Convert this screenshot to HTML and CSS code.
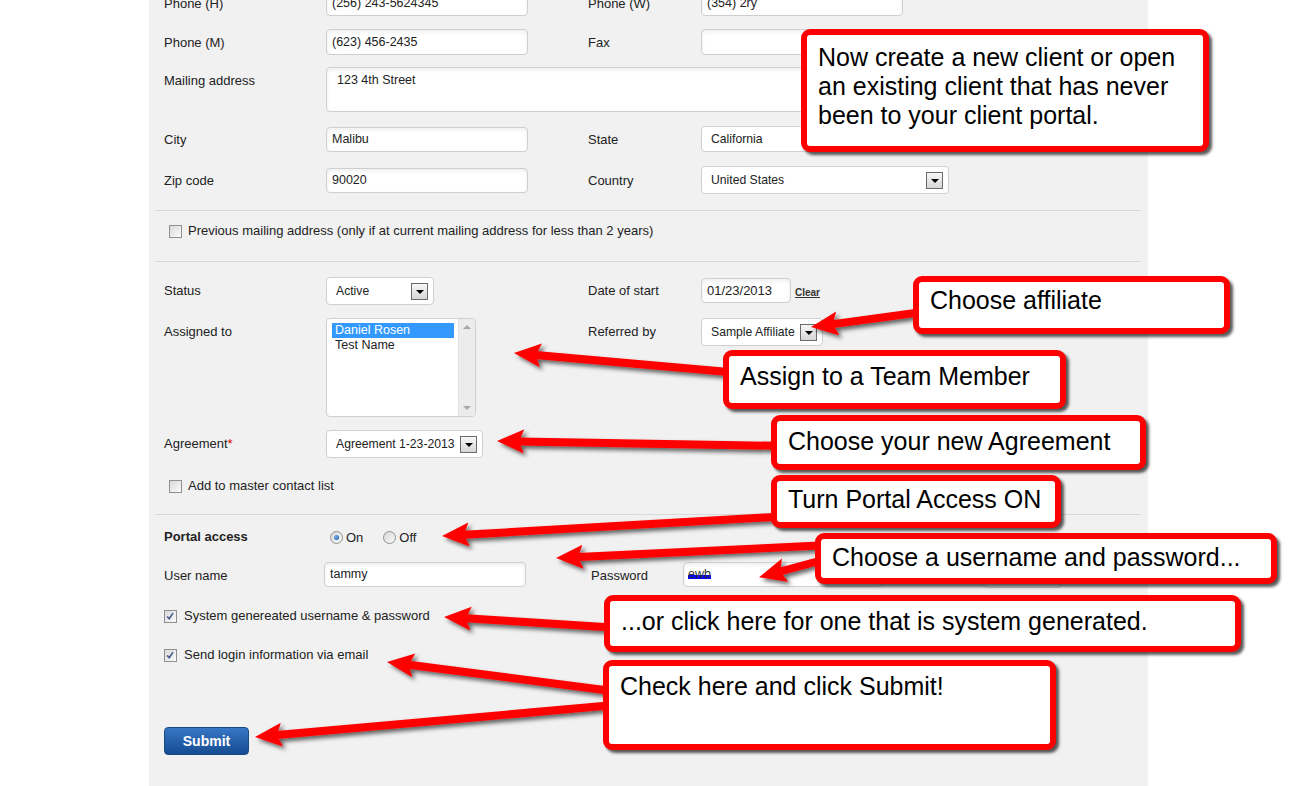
FILE: index.html
```html
<!DOCTYPE html>
<html>
<head>
<meta charset="utf-8">
<title>Client form</title>
<link rel="stylesheet" href="styles.css">
</head>
<body>
<div class="page">
  <div class="panel">
    <div class="form">
      <div class="row r-phone-h">
        <div class="lbl">Phone (H)</div>
        <div><div class="input w-std">(256) 243-5624345</div></div>
        <div class="lbl">Phone (W)</div>
        <div><div class="input w-std">(354) 2ry</div></div>
      </div>
      <div class="row r-phone-m">
        <div class="lbl">Phone (M)</div>
        <div><div class="input w-std">(623) 456-2435</div></div>
        <div class="lbl">Fax</div>
        <div><div class="input w-std"></div></div>
      </div>
      <div class="row r-mail">
        <div class="lbl">Mailing address</div>
        <div class="span3"><div class="textarea">123 4th Street</div></div>
      </div>
      <div class="row r-city">
        <div class="lbl">City</div>
        <div><div class="input w-std top1">Malibu</div></div>
        <div class="lbl">State</div>
        <div><div class="select s-state"><span>California</span><span class="ddbtn"></span></div></div>
      </div>
      <div class="row r-zip">
        <div class="lbl lbl-low">Zip code</div>
        <div><div class="input w-std top2">90020</div></div>
        <div class="lbl lbl-low">Country</div>
        <div><div class="select s-country"><span>United States</span><span class="ddbtn"></span></div></div>
      </div>

      <div class="divider d1"></div>
      <div class="check-row cr-prev"><span class="cb"></span><span>Previous mailing address (only if at current mailing address for less than 2 years)</span></div>
      <div class="divider d2"></div>

      <div class="row r-status">
        <div class="lbl">Status</div>
        <div><div class="select s-status"><span>Active</span><span class="ddbtn"></span></div></div>
        <div class="lbl">Date of start</div>
        <div class="date-wrap"><div class="input w-date top1">01/23/2013</div><a class="clear">Clear</a></div>
      </div>
      <div class="row r-assigned">
        <div class="lbl">Assigned to</div>
        <div>
          <div class="listbox">
            <div class="options">
              <div class="opt selected">Daniel Rosen</div>
              <div class="opt">Test Name</div>
            </div>
            <div class="scrollbar"><span class="sb-up"></span><span class="sb-down"></span></div>
          </div>
        </div>
        <div class="lbl">Referred by</div>
        <div><div class="select s-ref"><span>Sample Affiliate</span><span class="ddbtn"></span></div></div>
      </div>
      <div class="row r-agree">
        <div class="lbl">Agreement<span class="req">*</span></div>
        <div><div class="select s-agree"><span>Agreement 1-23-2013</span><span class="ddbtn"></span></div></div>
      </div>
      <div class="check-row cr-master"><span class="cb"></span><span>Add to master contact list</span></div>

      <div class="divider d3"></div>

      <div class="row r-portal">
        <div class="lbl-bold">Portal access</div>
        <div class="radios">
          <span class="rd on"></span><span class="rd-text">On</span>
          <span class="rd off-rd"></span><span class="rd-text">Off</span>
        </div>
      </div>
      <div class="row-user">
        <div class="lbl">User name</div>
        <div><div class="input w-user">tammy</div></div>
        <div class="lbl">Password</div>
        <div class="pw-wrap"><div class="input w-pw"><span class="pw-text">ewb</span></div><div class="gen-btn"></div></div>
      </div>
      <div class="check-row cr-sys"><span class="cb"><svg viewBox="0 0 13 13" width="11" height="11"><path d="M2.5 6.5 L5 9 L9.5 2.5" class="tick"/></svg></span><span>System genereated username &amp; password</span></div>
      <div class="check-row cr-send"><span class="cb"><svg viewBox="0 0 13 13" width="11" height="11"><path d="M2.5 6.5 L5 9 L9.5 2.5" class="tick"/></svg></span><span>Send login information via email</span></div>

      <div class="submit-row"><button class="submit">Submit</button></div>
    </div>
  </div>

  <svg class="arrows" width="1295" height="786" viewBox="0 0 1295 786">
    <defs>
      <filter id="sh" x="-10%" y="-60%" width="130%" height="220%">
        <feDropShadow dx="3" dy="3" stdDeviation="2" flood-color="#000" flood-opacity="0.6"/>
      </filter>
      <marker id="head" markerUnits="userSpaceOnUse" markerWidth="30" markerHeight="26" refX="5" refY="12" orient="auto">
        <path d="M0,0 L27,12 L0,24 L5,12 Z" fill="#ff0000"/>
      </marker>
    </defs>
    <g filter="url(#sh)" stroke="#ff0000" stroke-width="8" fill="none">
      <line x1="930" y1="311" x2="832.8" y2="324.1" marker-end="url(#head)"/>
      <line x1="740" y1="373" x2="535.9" y2="354.9" marker-end="url(#head)"/>
      <line x1="790" y1="446" x2="519" y2="441.4" marker-end="url(#head)"/>
      <line x1="790" y1="516" x2="464" y2="534.8" marker-end="url(#head)"/>
      <line x1="830" y1="545" x2="578" y2="557" marker-end="url(#head)"/>
      <line x1="830" y1="558" x2="780.3" y2="571.5" marker-end="url(#head)"/>
      <line x1="620" y1="628" x2="466" y2="618.3" marker-end="url(#head)"/>
      <line x1="620" y1="692" x2="408.8" y2="664.7" marker-end="url(#head)"/>
      <line x1="620" y1="704.5" x2="276.9" y2="735.1" marker-end="url(#head)"/>
    </g>
  </svg>

  <div class="callout c1">Now create a new client or open<br>an existing client that has never<br>been to your client portal.</div>
  <div class="callout c2">Choose affiliate</div>
  <div class="callout c3">Assign to a Team Member</div>
  <div class="callout c4">Choose your new Agreement</div>
  <div class="callout c5">Turn Portal Access ON</div>
  <div class="callout c6">Choose a username and password...</div>
  <div class="callout c7">...or click here for one that is system generated.</div>
  <div class="callout c8">Check here and click Submit!</div>
</div>
</body>
</html>
```

FILE: styles.css
```css
* { box-sizing: border-box; }
html, body { margin: 0; padding: 0; background: #fff; }
body {
  font-family: "Liberation Sans", Arial, sans-serif;
  font-size: 13px;
  color: #222;
  overflow: hidden;
}
.page { position: relative; width: 1295px; height: 786px; overflow: hidden; }
.panel {
  margin-left: 149px;
  width: 999px;
  height: 786px;
  background: #f1f1f1;
  overflow: hidden;
}
.form { margin-top: -10px; }

.row {
  display: grid;
  grid-template-columns: 162px 262px 113px 1fr;
  padding-left: 15px;
  align-items: start;
}
.lbl { padding-top: 6px; line-height: 15px; white-space: nowrap; }
.lbl-low { padding-top: 7px; }
.lbl-bold { font-weight: bold; line-height: 16px; }
.req { color: #e00000; }
.span3 { grid-column: 2 / span 3; }

.r-phone-h { margin-bottom: 13px; }
.r-phone-m { margin-bottom: 12px; }
.r-mail { margin-bottom: 14px; }
.r-city { margin-bottom: 14px; }
.r-status { margin-top: 15px; margin-bottom: 13px; }
.r-assigned { margin-bottom: 13px; }
.r-agree { margin-bottom: 20px; }
.r-portal { margin-top: 14px; margin-bottom: 17px; }

.input {
  height: 26px;
  border: 1px solid #cfcfcf;
  border-radius: 4px;
  background: #fff;
  box-shadow: inset 0 2px 4px rgba(0, 0, 0, 0.07);
  padding: 0 5px;
  font-size: 12.5px;
  line-height: 24px;
  white-space: nowrap;
  overflow: hidden;
  color: #222;
}
.w-std { width: 202px; }
.top1 { margin-top: 1px; height: 25px; line-height: 23px; }
.top2 { margin-top: 2px; height: 25px; line-height: 23px; }

.textarea {
  width: 560px;
  height: 45px;
  border: 1px solid #cfcfcf;
  border-radius: 4px;
  background: #fff;
  box-shadow: inset 0 2px 4px rgba(0, 0, 0, 0.07);
  padding: 5px 10px;
  font-size: 12.5px;
  line-height: 15px;
}

.select {
  display: flex;
  align-items: center;
  justify-content: space-between;
  height: 28px;
  border: 1px solid #cfcfcf;
  border-radius: 4px;
  background: #fff;
  padding: 0 5px 0 9px;
  font-size: 12.2px;
  white-space: nowrap;
  color: #222;
}
.s-state { width: 248px; height: 26px; }
.s-country { width: 248px; }
.s-status { width: 108px; }
.s-ref { width: 122px; }
.s-agree { width: 157px; padding-right: 5px; }
.ddbtn {
  position: relative;
  flex: 0 0 17px;
  width: 17px;
  height: 17px;
  border: 1px solid #6b6b6b;
  background: linear-gradient(#f7f7f7, #d6d6d6);
  margin-left: 3px;
}
.ddbtn::after {
  content: "";
  position: absolute;
  left: 4px;
  top: 6px;
  border-left: 4px solid transparent;
  border-right: 4px solid transparent;
  border-top: 4px solid #000;
}

.date-wrap { display: flex; align-items: flex-start; }
.w-date { width: 90px; font-size: 13px; }
.clear {
  margin-left: 4px;
  margin-top: 10px;
  font-size: 10px;
  font-weight: bold;
  color: #333;
  text-decoration: underline;
  line-height: 12px;
}

.listbox {
  display: flex;
  width: 150px;
  height: 99px;
  border: 1px solid #cfcfcf;
  border-radius: 4px;
  background: #fff;
  overflow: hidden;
}
.options { flex: 1; padding: 4px 0 0 5px; font-size: 12.5px; }
.opt { height: 15px; line-height: 15px; padding-left: 3px; width: 122px; color: #222; }
.opt.selected { background: #3399ff; color: #fff; }
.scrollbar {
  position: relative;
  width: 17px;
  background: #ececec;
  border-left: 1px solid #e2e2e2;
}
.sb-up, .sb-down {
  position: absolute;
  left: 4px;
  border-left: 4px solid transparent;
  border-right: 4px solid transparent;
}
.sb-up { top: 6px; border-bottom: 4px solid #a8a8a8; }
.sb-down { bottom: 6px; border-top: 4px solid #a8a8a8; }

.divider { height: 1px; background: #d9d9d9; margin-left: 6px; margin-right: 7px; }
.d1 { margin-top: 16px; }
.d2 { margin-top: 22px; }
.d3 { margin-top: 20px; }

.check-row {
  display: flex;
  align-items: center;
  line-height: 16px;
  height: 16px;
  white-space: nowrap;
}
.cr-prev { margin-top: 12px; padding-left: 20px; gap: 6px; }
.cr-master { padding-left: 20px; gap: 6px; }
.cr-sys { padding-left: 15px; gap: 7px; margin-bottom: 23px; }
.cr-send { padding-left: 15px; gap: 7px; margin-bottom: 64px; }

.cb {
  display: inline-flex;
  align-items: center;
  justify-content: center;
  flex: 0 0 13px;
  width: 13px;
  height: 13px;
  border: 1px solid #8e8f8f;
  background: linear-gradient(135deg, #d9d9d9, #fbfbfb);
}
.tick { fill: none; stroke: #4a5b8f; stroke-width: 2; }

.radios { display: flex; align-items: center; height: 16px; padding-left: 4px; }
.rd {
  position: relative;
  width: 13px;
  height: 13px;
  border-radius: 50%;
  border: 1px solid #8e8f8f;
  background: linear-gradient(135deg, #d6d6d6, #fcfcfc);
}
.rd.on::after {
  content: "";
  position: absolute;
  left: 3px;
  top: 3px;
  width: 5px;
  height: 5px;
  border-radius: 50%;
  background: radial-gradient(circle at 35% 35%, #6fb0ea, #1b5aa4);
}
.rd-text { margin-left: 3px; }
.off-rd { margin-left: 20px; }

.row-user {
  display: grid;
  grid-template-columns: 160px 267px 92px 1fr;
  padding-left: 15px;
  align-items: start;
  margin-bottom: 20px;
}
.row-user .lbl { padding-top: 6px; }
.w-user { width: 202px; height: 25px; line-height: 23px; }
.pw-wrap { display: flex; align-items: flex-start; }
.w-pw { width: 199px; height: 25px; line-height: 23px; padding-left: 4px; }
.pw-text {
  color: #333;
  background: linear-gradient(transparent 58%, #0000ff 58%, #0000ff 88%, transparent 88%);
}
.gen-btn {
  margin-left: 101px;
  width: 79px;
  height: 26px;
  border: 1px solid #cfcfcf;
  border-radius: 4px;
  background: #f7f7f7;
}

.submit-row { padding-left: 15px; }
.submit {
  width: 85px;
  height: 28px;
  border: 1px solid #1a4a86;
  border-radius: 4px;
  background: linear-gradient(#3777c6, #164b92);
  color: #fff;
  font-family: "Liberation Sans", Arial, sans-serif;
  font-size: 14px;
  font-weight: bold;
  padding: 0;
}

.arrows { position: absolute; left: 0; top: 0; pointer-events: none; }

.callout {
  position: absolute;
  border: 6px solid #ff0000;
  border-radius: 9px;
  background: #fff;
  box-shadow: 3px 3px 3px rgba(0, 0, 0, 0.65);
  font-family: "Liberation Sans", Arial, sans-serif;
  font-size: 25px;
  line-height: 29px;
  color: #000;
  padding-left: 11px;
  white-space: nowrap;
}
.c1 { left: 801px; top: 29px; width: 408px; height: 123px; padding-top: 8px; }
.c2 { left: 913px; top: 276px; width: 317px; height: 58px; padding-top: 4px; }
.c3 { left: 723px; top: 350px; width: 343px; height: 59px; padding-top: 6px; }
.c4 { left: 771px; top: 415px; width: 375px; height: 55px; padding-top: 6px; }
.c5 { left: 771px; top: 475px; width: 290px; height: 53px; padding-top: 4px; }
.c6 { left: 815px; top: 533px; width: 462px; height: 51px; padding-top: 4px; }
.c7 { left: 604px; top: 595px; width: 637px; height: 57px; padding-top: 6px; }
.c8 { left: 603px; top: 660px; width: 453px; height: 90px; padding-top: 6px; }
```
